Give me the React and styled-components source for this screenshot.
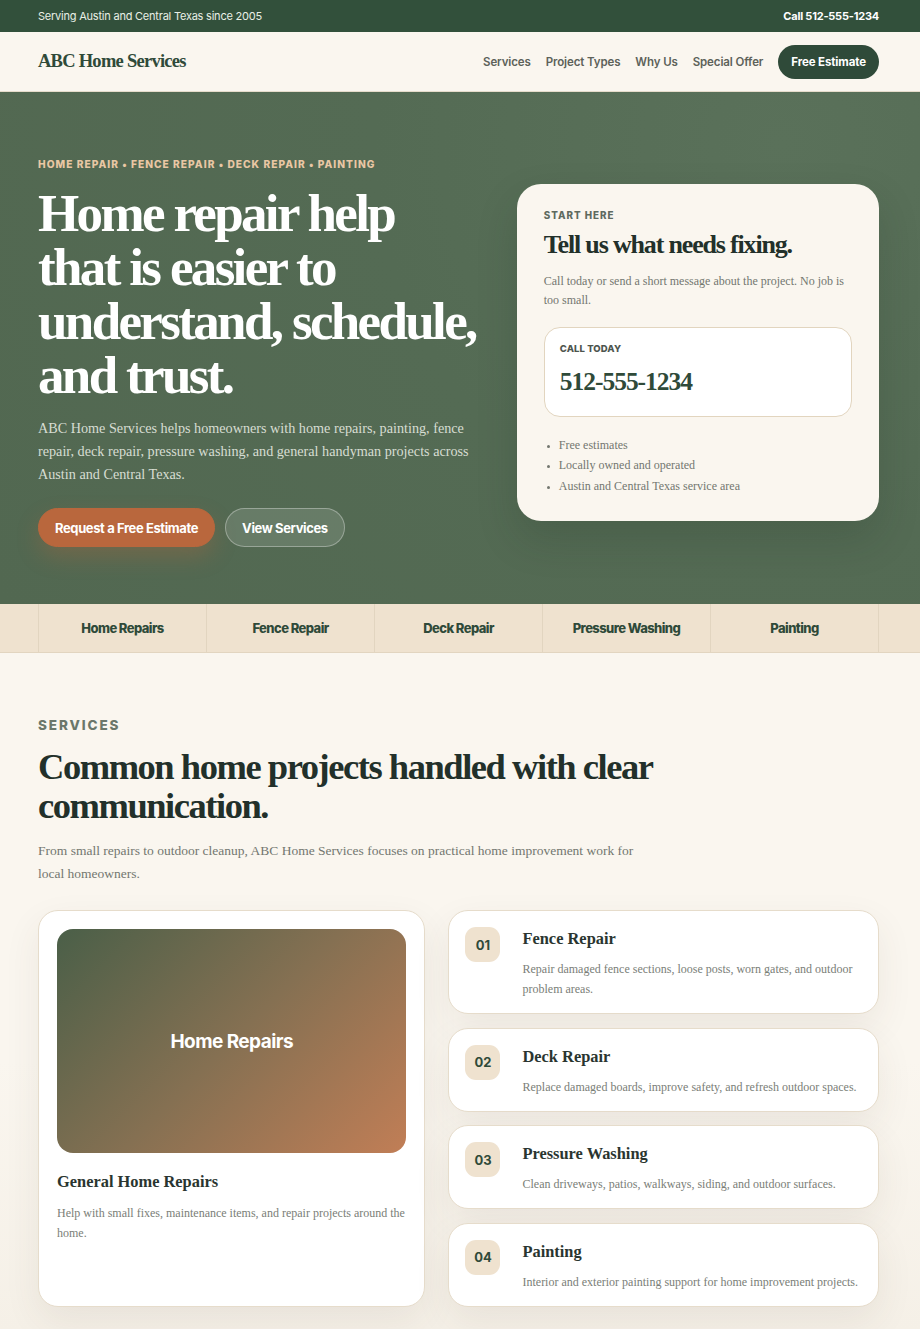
import React from "react";
import styled, { createGlobalStyle } from "styled-components";

const sans = `Inter, "Liberation Sans", Arial, sans-serif`;
const serif = `"Liberation Serif", "Times New Roman", serif`;

const GlobalStyle = createGlobalStyle`
  * { box-sizing: border-box; }
  body {
    margin: 0;
    background: #faf6ef;
    font-family: ${serif};
    color: #22302a;
  }
  h1, h2, h3, p, ul { margin: 0; }
`;

const TopBar = styled.div`
  background: #32503b;
  color: #e9efe6;
  font-family: ${sans};
  font-size: 11px;
  letter-spacing: -0.02em;
  height: 32px;
  display: flex;
  align-items: center;
  justify-content: space-between;
  padding: 0 41px 0 38px;
  strong {
    font-weight: 700;
    color: #fff;
  }
`;

const Nav = styled.header`
  height: 60px;
  background: #faf6ef;
  border-bottom: 1px solid #e6dccb;
  display: flex;
  align-items: center;
  justify-content: space-between;
  padding: 0 41px 0 38px;
`;

const Logo = styled.div`
  font-family: ${serif};
  font-weight: 700;
  font-size: 18.5px;
  letter-spacing: -0.04em;
  color: #2f4a39;
`;

const Links = styled.nav`
  display: flex;
  align-items: center;
  gap: 15px;
  a {
    font-family: ${sans};
    font-size: 11.5px;
    font-weight: 600;
    color: #5d625a;
    text-decoration: none;
    letter-spacing: -0.01em;
  }
`;

const NavButton = styled.a`
  height: 34px;
  padding: 0 13px;
  border-radius: 999px;
  background: #2f4a39;
  display: inline-flex;
  align-items: center;
  && {
    color: #fff;
    font-weight: 700;
  }
`;

const Hero = styled.section`
  background: radial-gradient(circle at 85% 10%, #5a715a 0%, #546b54 45%, #526851 100%);
  padding: 66px 41px 57px 38px;
  display: grid;
  grid-template-columns: 1.25fr 1fr;
  gap: 26px;
  align-items: center;
`;

const Eyebrow = styled.div`
  font-family: ${sans};
  font-weight: 800;
  font-size: ${(p) => p.$size || 10.2}px;
  letter-spacing: ${(p) => p.$spacing || 0.1}em;
  text-transform: uppercase;
  color: ${(p) => p.$color || "#e9c7a4"};
`;

const HeroTitle = styled.h1`
  margin-top: 16px;
  max-width: 445px;
  font-family: ${serif};
  font-weight: 700;
  font-size: 53px;
  line-height: 54px;
  letter-spacing: -0.05em;
  color: #fff;
`;

const HeroText = styled.p`
  margin-top: 15px;
  max-width: 445px;
  font-size: 14.2px;
  line-height: 23px;
  color: #d7ddd2;
`;

const Buttons = styled.div`
  margin-top: 22px;
  display: flex;
  gap: 10px;
`;

const Button = styled.a`
  height: 39px;
  padding: 0 16px;
  border-radius: 999px;
  display: inline-flex;
  align-items: center;
  font-family: ${sans};
  font-weight: 700;
  font-size: 13px;
  letter-spacing: -0.03em;
  color: #fff;
  text-decoration: none;
  background: ${(p) => (p.$ghost ? "rgba(255,255,255,0.12)" : "#b9673d")};
  border: 1px solid ${(p) => (p.$ghost ? "rgba(255,255,255,0.32)" : "#b9673d")};
  box-shadow: ${(p) => (p.$ghost ? "none" : "0 10px 22px rgba(185,103,61,0.3)")};
`;

const StartCard = styled.div`
  background: #faf6ef;
  border-radius: 24px;
  padding: 26px 27px 25px;
  box-shadow: 0 18px 40px rgba(30, 45, 33, 0.18);
`;

const CardTitle = styled.h2`
  margin-top: 9px;
  font-family: ${serif};
  font-weight: 700;
  font-size: 26px;
  line-height: 30px;
  letter-spacing: -0.045em;
  color: #22302a;
`;

const SmallText = styled.p`
  margin-top: 12px;
  font-size: 12px;
  line-height: 19px;
  color: #73776f;
`;

const CallBox = styled.div`
  margin-top: 17px;
  background: #fff;
  border: 1px solid #e2d5bf;
  border-radius: 16px;
  padding: 15px 15px 19px;
`;

const Phone = styled.div`
  margin-top: 13px;
  font-family: ${serif};
  font-weight: 700;
  font-size: 25.5px;
  letter-spacing: -0.04em;
  color: #2f4a39;
`;

const Bullets = styled.ul`
  margin-top: 18px;
  padding-left: 15px;
  font-size: 12px;
  line-height: 20.5px;
  color: #73776f;
  li::marker {
    font-size: 9px;
  }
`;

const Strip = styled.div`
  background: #efe2cf;
  border-bottom: 1px solid #e2d5c0;
  padding: 0 41px 0 38px;
`;

const StripGrid = styled.div`
  display: grid;
  grid-template-columns: repeat(5, 1fr);
  border-right: 1px solid #e2d5c0;
`;

const StripCell = styled.div`
  height: 48px;
  display: flex;
  align-items: center;
  justify-content: center;
  border-left: 1px solid #e2d5c0;
  font-family: ${sans};
  font-weight: 800;
  font-size: 13px;
  letter-spacing: -0.045em;
  color: #2f4a39;
`;

const Services = styled.section`
  padding: 64px 41px 24px 38px;
  background: linear-gradient(#faf6ef 60%, #f5f0e7);
`;

const SectionTitle = styled.h2`
  margin-top: 14px;
  max-width: 660px;
  font-family: ${serif};
  font-weight: 700;
  font-size: 36.5px;
  line-height: 39px;
  letter-spacing: -0.04em;
  color: #22302a;
`;

const SectionText = styled.p`
  margin-top: 15px;
  max-width: 610px;
  font-size: 13.5px;
  line-height: 22.5px;
  color: #73776f;
`;

const CardGrid = styled.div`
  margin-top: 25px;
  display: grid;
  grid-template-columns: 0.9fr 1fr;
  gap: 23px;
`;

const Panel = styled.div`
  background: #fff;
  border: 1px solid #e6dccb;
  border-radius: 20px;
  box-shadow: 0 14px 36px rgba(80, 70, 50, 0.08);
`;

const FeatureCard = styled(Panel)`
  padding: 18px 18px;
`;

const FeatureImage = styled.div`
  height: 224px;
  border-radius: 16px;
  background: linear-gradient(135deg, #4a5f48 0%, #857052 50%, #c17e56 100%);
  display: flex;
  align-items: center;
  justify-content: center;
  font-family: ${sans};
  font-weight: 700;
  font-size: 19px;
  letter-spacing: -0.03em;
  color: #fff;
`;

const ItemTitle = styled.h3`
  font-family: ${serif};
  font-weight: 700;
  font-size: 16.4px;
  line-height: 20px;
  color: #2a3530;
  margin-top: ${(p) => p.$top || 0}px;
`;

const ItemText = styled.p`
  margin-top: ${(p) => p.$top || 10}px;
  font-size: 12px;
  line-height: 20px;
  color: #7a7e77;
`;

const List = styled.div`
  display: flex;
  flex-direction: column;
  gap: 13.5px;
`;

const Item = styled(Panel)`
  padding: 16px 16px 14px;
  display: flex;
  gap: 22px;
`;

const Num = styled.div`
  flex: none;
  width: 35px;
  height: 35px;
  border-radius: 11px;
  background: #efe2cf;
  display: flex;
  align-items: center;
  justify-content: center;
  font-family: ${sans};
  font-weight: 700;
  font-size: 13px;
  color: #2f4a39;
`;

const ItemBody = styled.div`
  padding-top: 2px;
`;

const strip = ["Home Repairs", "Fence Repair", "Deck Repair", "Pressure Washing", "Painting"];

const items = [
  { n: "01", title: "Fence Repair", text: "Repair damaged fence sections, loose posts, worn gates, and outdoor problem areas." },
  { n: "02", title: "Deck Repair", text: "Replace damaged boards, improve safety, and refresh outdoor spaces." },
  { n: "03", title: "Pressure Washing", text: "Clean driveways, patios, walkways, siding, and outdoor surfaces." },
  { n: "04", title: "Painting", text: "Interior and exterior painting support for home improvement projects." },
];

export default function App() {
  return (
    <>
      <GlobalStyle />
      <TopBar>
        <span>Serving Austin and Central Texas since 2005</span>
        <strong>Call 512-555-1234</strong>
      </TopBar>
      <Nav>
        <Logo>ABC Home Services</Logo>
        <Links>
          <a href="#services">Services</a>
          <a href="#types">Project Types</a>
          <a href="#why">Why Us</a>
          <a href="#offer">Special Offer</a>
          <NavButton href="#estimate">Free Estimate</NavButton>
        </Links>
      </Nav>

      <Hero>
        <div>
          <Eyebrow>Home Repair • Fence Repair • Deck Repair • Painting</Eyebrow>
          <HeroTitle>
            Home repair help that is easier to understand, schedule, and trust.
          </HeroTitle>
          <HeroText>
            ABC Home Services helps homeowners with home repairs, painting, fence
            repair, deck repair, pressure washing, and general handyman projects
            across Austin and Central Texas.
          </HeroText>
          <Buttons>
            <Button href="#estimate">Request a Free Estimate</Button>
            <Button $ghost href="#services">View Services</Button>
          </Buttons>
        </div>
        <StartCard>
          <Eyebrow $color="#5e6a5f" $size={9.8}>Start Here</Eyebrow>
          <CardTitle>Tell us what needs fixing.</CardTitle>
          <SmallText>
            Call today or send a short message about the project. No job is too small.
          </SmallText>
          <CallBox>
            <Eyebrow $color="#4d554e" $size={9.5} $spacing={0.01}>Call Today</Eyebrow>
            <Phone>512-555-1234</Phone>
          </CallBox>
          <Bullets>
            <li>Free estimates</li>
            <li>Locally owned and operated</li>
            <li>Austin and Central Texas service area</li>
          </Bullets>
        </StartCard>
      </Hero>

      <Strip>
        <StripGrid>
          {strip.map((s) => (
            <StripCell key={s}>{s}</StripCell>
          ))}
        </StripGrid>
      </Strip>

      <Services id="services">
        <Eyebrow $color="#6b776b" $size={13.5} $spacing={0.14}>Services</Eyebrow>
        <SectionTitle>Common home projects handled with clear communication.</SectionTitle>
        <SectionText>
          From small repairs to outdoor cleanup, ABC Home Services focuses on practical
          home improvement work for local homeowners.
        </SectionText>
        <CardGrid>
          <FeatureCard>
            <FeatureImage>Home Repairs</FeatureImage>
            <ItemTitle $top={19}>General Home Repairs</ItemTitle>
            <ItemText $top={11}>
              Help with small fixes, maintenance items, and repair projects around the home.
            </ItemText>
          </FeatureCard>
          <List>
            {items.map((it) => (
              <Item key={it.n}>
                <Num>{it.n}</Num>
                <ItemBody>
                  <ItemTitle>{it.title}</ItemTitle>
                  <ItemText>{it.text}</ItemText>
                </ItemBody>
              </Item>
            ))}
          </List>
        </CardGrid>
      </Services>
    </>
  );
}
